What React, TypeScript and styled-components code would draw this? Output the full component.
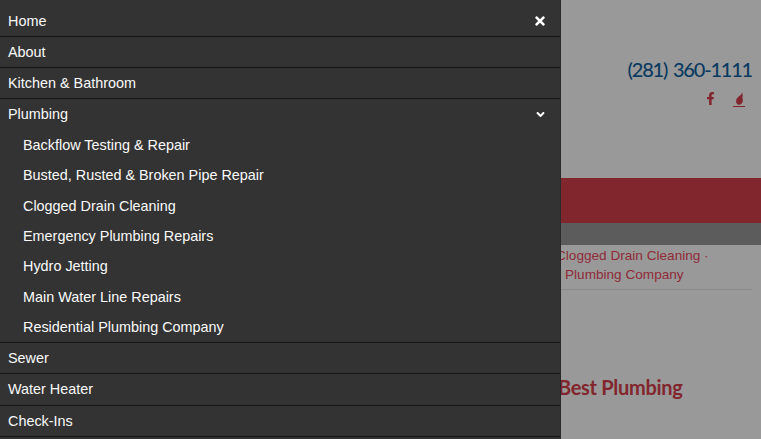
import React from "react";
import styled, { createGlobalStyle } from "styled-components";
import { FaAngleDown, FaFacebookF, FaTimes } from "react-icons/fa";

const GlobalStyle = createGlobalStyle`
  html, body {
    margin: 0;
    height: 100%;
    overflow: hidden;
    background: #999;
  }
`;

const Page = styled.div`
  position: relative;
  width: 761px;
  height: 439px;
  overflow: hidden;
  background: #999;
  font-family: "Liberation Sans", Arial, sans-serif;
`;

const Header = styled.header`
  height: 178px;
  box-sizing: border-box;
  padding: 55px 9px 0 0;
  display: flex;
  flex-direction: column;
  align-items: flex-end;
`;

const Phone = styled.div`
  font-family: Lato, sans-serif;
  font-size: 20px;
  font-weight: 500;
  letter-spacing: -1.2px;
  word-spacing: 2px;
  line-height: 28px;
  color: #0b3a60;
  white-space: nowrap;
`;

const Social = styled.div`
  display: flex;
  gap: 17px;
  margin-top: 9px;
  padding-right: 7px;
  color: #82262e;
`;

const SocialLink = styled.a<{ $underline?: boolean }>`
  display: block;
  height: 14px;
  width: 12px;
  border-bottom: 1px solid ${(p) => (p.$underline ? "#82262e" : "transparent")};

  svg {
    display: block;
    margin: 0 auto;
  }
`;

const RedBand = styled.div`
  height: 45px;
  background: #82262e;
`;

const GreyBand = styled.div`
  height: 22px;
  background: #5c5c5c;
`;

const Crumbs = styled.div`
  box-sizing: border-box;
  height: 45px;
  margin-right: 9px;
  padding: 1px 0 0 556px;
  border-bottom: 1px solid #8a8a8a;
  font-size: 13.6px;
  line-height: 19px;
  color: #8f2b38;
  white-space: nowrap;
`;

const CrumbIndent = styled.div`
  padding-left: 9px;
`;

const Heading = styled.h2`
  margin: 82px 0 0 558px;
  font-family: Lato, sans-serif;
  font-size: 20px;
  font-weight: 700;
  letter-spacing: -0.3px;
  line-height: 30px;
  color: #82262e;
  white-space: nowrap;
`;

const Drawer = styled.nav`
  position: absolute;
  top: 0;
  left: 0;
  bottom: 0;
  width: 560px;
  background: #333;
  border-right: 1px solid #2a2a2a;
`;

const Menu = styled.ul`
  margin: 0;
  padding: 0;
  list-style: none;
`;

const MenuItem = styled.li<{ $tall?: boolean; $first?: boolean }>`
  display: flex;
  align-items: center;
  justify-content: space-between;
  box-sizing: border-box;
  height: ${(p) => (p.$first ? "37px" : p.$tall ? "32px" : "31px")};
  padding: ${(p) => (p.$first ? "6px" : "0")} 13px 1px 8px;
  border-bottom: 1px solid #161616;
  font-size: 14.4px;
  color: #fafafa;
`;

const OpenItem = styled(MenuItem)`
  border-bottom: none;
`;

const SubMenu = styled.ul`
  margin: 0;
  padding: 0 0 0 23px;
  list-style: none;
  border-bottom: 1px solid #161616;
`;

const SubItem = styled.li`
  height: 30.33px;
  display: flex;
  align-items: center;
  font-size: 14.4px;
  color: #fafafa;
`;

const top = ["About", "Kitchen & Bathroom"];
const plumbing = [
  "Backflow Testing & Repair",
  "Busted, Rusted & Broken Pipe Repair",
  "Clogged Drain Cleaning",
  "Emergency Plumbing Repairs",
  "Hydro Jetting",
  "Main Water Line Repairs",
  "Residential Plumbing Company",
];

function Flame() {
  return (
    <svg width="9" height="13" viewBox="1.6 0 7.2 12.2" fill="currentColor">
      <path d="M7.4 0C7.6 1.6 6.6 2.6 5.4 3.6 3.8 5 2 6.2 2 8.6 2 10.6 3.2 12 4.6 12 6.8 12 8.4 10.2 8.4 7.8 8.4 6.8 8 6 7.8 5.2 8.6 3.6 8.2 1.4 7.4 0Z" />
    </svg>
  );
}

export default function App() {
  return (
    <>
      <GlobalStyle />
      <Page>
        <Header>
          <Phone>(281) 360-1111</Phone>
          <Social>
            <SocialLink>
              <FaFacebookF size={13} />
            </SocialLink>
            <SocialLink $underline>
              <Flame />
            </SocialLink>
          </Social>
        </Header>
        <RedBand />
        <GreyBand />
        <Crumbs>
          <div>Clogged Drain Cleaning ·</div>
          <CrumbIndent>Plumbing Company</CrumbIndent>
        </Crumbs>
        <Heading>Best Plumbing</Heading>
        <Drawer>
          <Menu>
            <MenuItem $first>
              Home
              <FaTimes size={14} color="#fff" />
            </MenuItem>
            {top.map((label) => (
              <MenuItem key={label}>{label}</MenuItem>
            ))}
            <OpenItem>
              Plumbing
              <FaAngleDown size={13} color="#fff" />
            </OpenItem>
            <SubMenu>
              {plumbing.map((label) => (
                <SubItem key={label}>{label}</SubItem>
              ))}
            </SubMenu>
            <MenuItem>Sewer</MenuItem>
            <MenuItem $tall>Water Heater</MenuItem>
            <MenuItem>Check-Ins</MenuItem>
          </Menu>
        </Drawer>
      </Page>
    </>
  );
}
